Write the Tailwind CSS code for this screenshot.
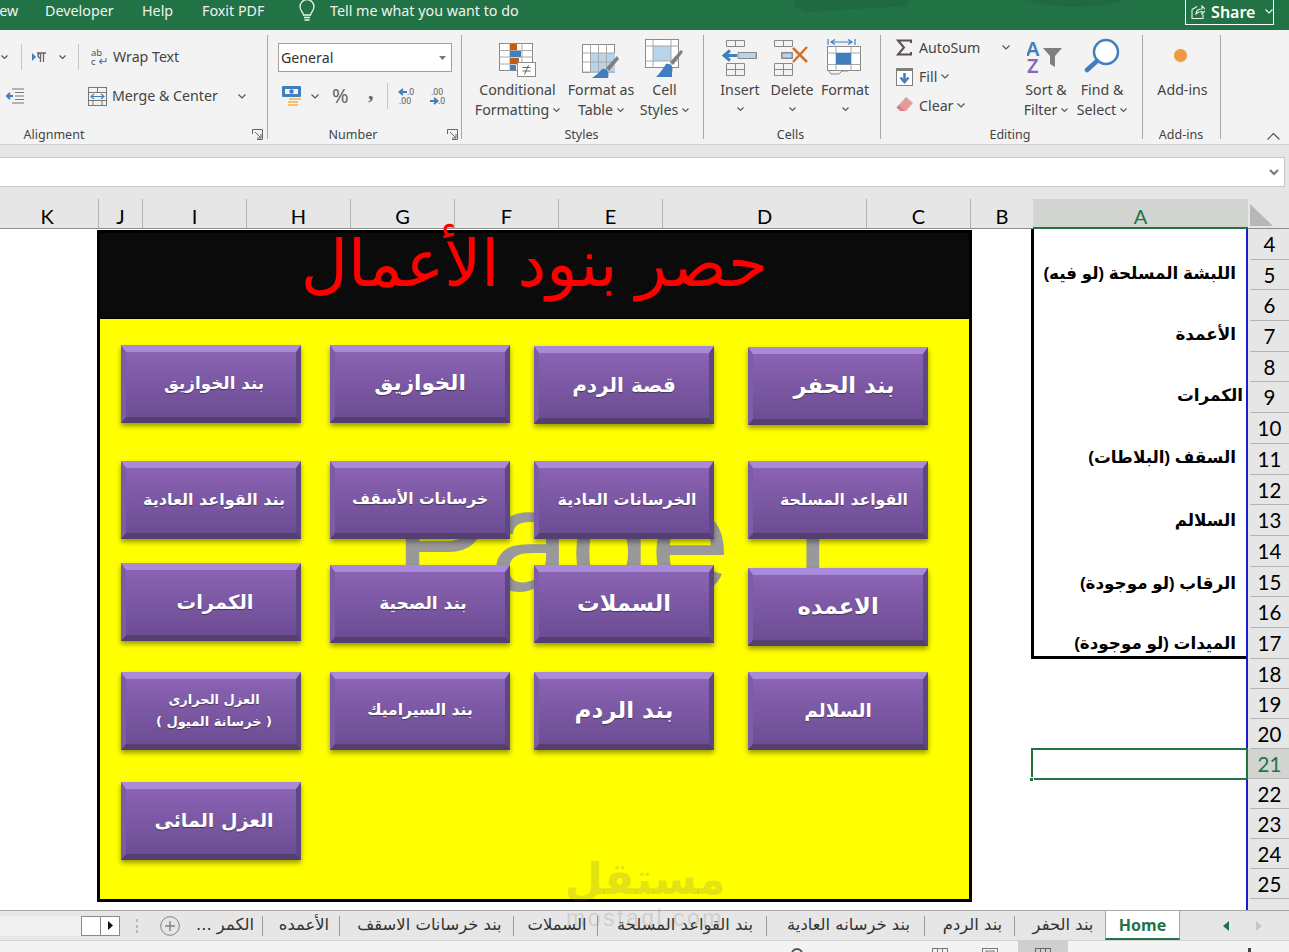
<!DOCTYPE html>
<html lang="en">
<head>
  <meta charset="UTF-8">
  <title>Excel - Home</title>
  <script src="https://cdn.jsdelivr.net/npm/@tailwindcss/browser@4"></script>
</head>
<body class="bg-white">
<div class="relative w-[1289px] h-[952px] overflow-hidden flex flex-col font-['Noto_Sans','DejaVu_Sans',sans-serif] text-[#444]">

  <!-- Title / tab strip -->
  <div class="relative h-[30px] bg-[#217346] text-[#f1f1f1] text-[14.300px] flex items-center overflow-hidden">
    <svg class="absolute left-[780px] top-0" width="400" height="14"><path d="M15 0h115l-3 6-50 3-50 3-12-6zM245 0h100l-25 6-30 1-30-3z" fill="#1f6a43"/></svg>
    <span class="absolute left-[-13px] top-0">View</span>
    <span class="absolute left-[45px] top-0">Developer</span>
    <span class="absolute left-[142px] top-0">Help</span>
    <span class="absolute left-[202px] top-0">Foxit PDF</span>
    <svg class="absolute left-[298px] top-0" width="18" height="22" fill="none" stroke="#f1f1f1" stroke-width="1.300"><path d="M5.500 15c-.3-3-3.500-4.500-3.500-8.300a7 7 0 0 1 14 0c0 3.800-3.200 5.300-3.500 8.300z"/><path d="M6 17.500h6M6.500 20h5"/></svg>
    <span class="absolute left-[330px] top-0">Tell me what you want to do</span>
    <div class="absolute left-[1185px] top-[-2px] w-[89px] h-[27px] border border-white flex items-center pl-[5px] gap-[6px] text-white font-semibold text-[16px]">
      <svg width="15" height="15" fill="none" stroke="#f1f1f1" stroke-width="1.100"><path d="M1 5.500v9h11v-4M1 5.500l5-3M5 10c0-4 3-5 6-5V2l4 4-4 4V7.500c-2 0-4 .5-6 2.500z"/></svg>
      <span>Share</span>
      <svg class="ml-[4px]" width="8" height="5" fill="none" stroke="#f1f1f1" stroke-width="1.200"><path d="M.5.500 4 4l3.500-3.500"/></svg>
    </div>
  </div>

  <!-- Ribbon -->
  <div class="h-[115px] flex bg-[#f3f3f3] border-b border-[#d2d2d2] text-[14.200px] leading-[20px]">

    <!-- Alignment -->
    <div class="relative w-[267px] shrink-0 flex flex-col">
      <div class="h-[97px] flex flex-col pt-[15px] gap-[15px]">
        <div class="h-6 flex items-center">
          <svg class="ml-[1px]" width="7" height="5" fill="none" stroke="#555" stroke-width="1.200"><path d="M.5.500 3.500 3.500l3-3"/></svg>
          <div class="ml-[13px] w-px h-[26px] bg-[#c6c6c6]"></div>
          <svg class="ml-[10px]" width="15" height="11"><path d="M0 1l4 4-4 4z" fill="#3f7fbf"/><path d="M5 1h9M8.500 1v9M11.500 1v9M8.500 1a2.500 2.500 0 0 0 0 5" fill="none" stroke="#666" stroke-width="1.300"/></svg>
          <svg class="ml-[12px]" width="7" height="5" fill="none" stroke="#555" stroke-width="1.200"><path d="M.5.500 3.500 3.500l3-3"/></svg>
          <div class="ml-[12px] w-px h-[26px] bg-[#c6c6c6]"></div>
          <svg class="ml-[12px]" width="16" height="18" fill="none"><text x="0" y="8" font-size="9.500" fill="#555" font-family="Noto Sans">ab</text><text x="0" y="17" font-size="9.500" fill="#555" font-family="Noto Sans">c</text><path d="M15 10v3.500H9M11 11l-2.500 2.500L11 16" stroke="#3f7fbf" stroke-width="1.100"/></svg>
          <span class="ml-[6px]">Wrap Text</span>
        </div>
        <div class="h-6 flex items-center">
          <svg class="ml-[6px]" width="18" height="16" fill="none"><path d="M7 8H1M4 5 1 8l3 3" stroke="#3f7fbf" stroke-width="2"/><path d="M6 1h12M9 4.500h9M9 8h9M9 11.500h9M6 15h12" stroke="#777"/></svg>
          <svg class="ml-[64px]" width="19" height="19" fill="none" stroke="#777"><rect x=".5" y=".5" width="18" height="18"/><path d="M.5 5.500h18M.5 13.500h18M9.500.500v5M5 13.500v5M14 13.500v5"/><path d="M3 9.500h13M6 7 3 9.500 6 12M13 7l3 2.500-3 2.500" stroke="#3f7fbf" stroke-width="1.100"/></svg>
          <span class="ml-[5px]">Merge &amp; Center</span>
          <svg class="ml-[20px]" width="8" height="5" fill="none" stroke="#555" stroke-width="1.200"><path d="M.5.500 4 4l3.500-3.500"/></svg>
        </div>
      </div>
      <div class="text-center text-[12.500px] leading-[16px] pr-[159px] text-[#444]">Alignment</div>
      <svg class="absolute left-[252px] top-[99px]" width="11" height="11" fill="none" stroke="#666"><path d="M.5 5V.5H10.500V10.500H5M3 3l6 6M9 5v4H5"/></svg>
    </div>
    <div class="w-px h-[104px] mt-[5px] bg-[#a8a8a8]"></div>

    <!-- Number -->
    <div class="relative w-[193px] shrink-0 flex flex-col">
      <div class="h-[97px] pl-[10px]">
        <div class="mt-[13px] w-[174px] h-[29px] bg-white border border-[#a0a0a0] flex items-center pl-[2px] text-[#333]">
          <span>General</span>
          <svg class="ml-auto mr-[5px]" width="7" height="4"><path d="M0 0h7L3.500 4z" fill="#777"/></svg>
        </div>
        <div class="mt-[12px] h-6 flex items-center">
          <svg class="ml-[4px]" width="20" height="20"><rect x="0" y="0" width="19" height="11" rx="1" fill="#3f7fbf"/><rect x="3" y="3" width="13" height="5" fill="#f3f3f3"/><circle cx="9.500" cy="5.500" r="2.200" fill="#3f7fbf"/><path d="M7 12h12v2H7zM6 15h10v2H6zM6 18h10v2H6z" fill="#f2c26b"/></svg>
          <svg class="ml-[9px]" width="8" height="5" fill="none" stroke="#555" stroke-width="1.200"><path d="M.5.500 4 4l3.500-3.500"/></svg>
          <span class="ml-[13px] w-[16px] text-[20px] text-[#666]">%</span>
          <span class="ml-[20px] w-[6px] text-[22px] leading-[12px] -mt-[9px] font-bold text-[#666] font-['Liberation_Serif',serif]">,</span>
          <div class="ml-[13px] w-px h-[26px] bg-[#c6c6c6]"></div>
          <svg class="ml-[10px]" width="17" height="18"><path d="M9 5H3M5 2 1.500 5 5 8" fill="none" stroke="#3f7fbf" stroke-width="2"/><text x="6" y="8" font-size="8.500" fill="#555" font-family="Noto Sans" text-anchor="start" dx="3">.0</text><text x="1" y="17" font-size="8.500" fill="#555" font-family="Noto Sans">.00</text></svg>
          <svg class="ml-[13px]" width="17" height="18"><text x="3" y="8" font-size="8.500" fill="#555" font-family="Noto Sans">.00</text><path d="M2 14h6M6 11l3.500 3L6 17" fill="none" stroke="#3f7fbf" stroke-width="2"/><text x="10" y="17" font-size="8.500" fill="#555" font-family="Noto Sans">.0</text></svg>
        </div>
      </div>
      <div class="text-center text-[12.500px] leading-[16px] pr-[23px]">Number</div>
      <svg class="absolute left-[179px] top-[99px]" width="11" height="11" fill="none" stroke="#666"><path d="M.5 5V.5H10.500V10.500H5M3 3l6 6M9 5v4H5"/></svg>
    </div>
    <div class="w-px h-[104px] mt-[5px] bg-[#a8a8a8]"></div>

    <!-- Styles -->
    <div class="w-[241px] shrink-0 flex flex-col">
      <div class="h-[97px] flex pl-[7px]">
        <div class="w-[97px] flex flex-col items-center">
          <svg class="mt-[13px] h-[37px]" width="38" height="35" fill="none"><rect x=".5" y=".5" width="33" height="27" fill="#fff" stroke="#8a8a8a"/><path d="M.5 7.500h33M.5 14h33M.5 21h33M11 .5v27M23 .5v27" stroke="#a8a8a8"/><rect x="11" y="1" width="7" height="6" fill="#c55a11"/><rect x="11" y="8" width="11" height="6" fill="#3f7fbf"/><rect x="11" y="15" width="9" height="6" fill="#c55a11"/><rect x="11" y="22" width="6" height="5" fill="#3f7fbf"/><rect x="18.500" y="19.500" width="18" height="14" fill="#fff" stroke="#8a8a8a"/><path d="M23.500 24.500h8M23.500 28h8M29.500 22l-4 9.500" stroke="#666"/></svg>
          <span class="leading-[20px]">Conditional</span>
          <span class="leading-[20px] flex items-center gap-[4px]">Formatting
            <svg width="7" height="5" fill="none" stroke="#555" stroke-width="1.100"><path d="M.5.500 3.500 3.500l3-3"/></svg></span>
        </div>
        <div class="w-[70px] flex flex-col items-center">
          <svg class="mt-[12px] h-[38px]" width="38" height="38" fill="none"><rect x=".5" y="2.500" width="32" height="28" fill="#fff" stroke="#8a8a8a"/><rect x="8" y="11" width="25" height="20" fill="#b9d3e8"/><path d="M.5 11h32M.5 20h32M.5 30h32M8.500 2.500v28M16.500 2.500v28M24.500 2.500v28" stroke="#a8a8a8"/><path d="M37 17 27 29l-3-3 11-12z" fill="#7f7f7f"/><path d="M20 27c4-1 8 2 6 9H10c3-2 7-5 10-9z" fill="#3f7fbf"/></svg>
          <span class="leading-[20px]">Format as</span>
          <span class="leading-[20px] flex items-center gap-[4px]">Table
            <svg width="7" height="5" fill="none" stroke="#555" stroke-width="1.100"><path d="M.5.500 3.500 3.500l3-3"/></svg></span>
        </div>
        <div class="w-[57px] flex flex-col items-center">
          <svg class="mt-[9px] h-[41px]" width="39" height="41" fill="none"><rect x=".5" y=".5" width="33" height="28" fill="#fff" stroke="#8a8a8a"/><rect x="8" y="7" width="18" height="15" fill="#b9d3e8"/><path d="M.5 7h33M.5 22h33M8 .5v28M26 .5v28" stroke="#a8a8a8"/><path d="M38 13 28 26l-3-3 11-12z" fill="#7f7f7f"/><path d="M21 25c4-1 8 2 6 9v4H11c3-3 7-8 10-13z" fill="#3f7fbf"/></svg>
          <span class="leading-[20px]">Cell</span>
          <span class="leading-[20px] flex items-center gap-[4px]">Styles
            <svg width="7" height="5" fill="none" stroke="#555" stroke-width="1.100"><path d="M.5.500 3.500 3.500l3-3"/></svg></span>
        </div>
      </div>
      <div class="text-center text-[12.500px] leading-[16px] pr-[2px]">Styles</div>
    </div>
    <div class="w-px h-[104px] mt-[5px] bg-[#a8a8a8]"></div>

    <!-- Cells -->
    <div class="w-[176px] shrink-0 flex flex-col">
      <div class="h-[97px] flex pl-[11px]">
        <div class="w-[50px] flex flex-col items-center">
          <svg class="mt-[10px] h-[40px]" width="36" height="36" fill="none" stroke="#8a8a8a"><path d="M4.500.500h18v6h-18zM13.500.500v6M16.500 12.500h18v6h-18zM25.500 12.500v6M4.500 23.500h18v12h-18zM4.500 29.500h18M13.500 23.500v12"/><path d="M16 12.500h18v6H16z" fill="#b9d3e8"/><path d="M15 15.500H4M8 10.500l-6 5 6 5" stroke="#3f7fbf" stroke-width="3"/></svg>
          <span class="leading-[20px]">Insert</span>
          <svg class="mt-[7px]" width="7" height="5" fill="none" stroke="#555" stroke-width="1.100"><path d="M.5.500 3.500 3.500l3-3"/></svg>
        </div>
        <div class="w-[54px] flex flex-col items-center">
          <svg class="mt-[10px] h-[40px]" width="36" height="36" fill="none" stroke="#8a8a8a"><path d="M.5.500h18v6H.5zM9.500.500v6M7.500 12.500h11v6h-11zM.5 23.500h18v12H.5zM.5 29.500h18M9.500 23.500v12"/><path d="M8 13h10v5H8z" fill="#b9d3e8"/><path d="M19 8l14 14M33 7 19 22" stroke="#d0722c" stroke-width="2.500"/></svg>
          <span class="leading-[20px]">Delete</span>
          <svg class="mt-[7px]" width="7" height="5" fill="none" stroke="#555" stroke-width="1.100"><path d="M.5.500 3.500 3.500l3-3"/></svg>
        </div>
        <div class="w-[52px] flex flex-col items-center">
          <svg class="mt-[8px] h-[42px]" width="36" height="38" fill="none"><path d="M1 1v6M28 1v6M4 4h21M8 1.500 4 4l4 2.500M21 1.500 25 4l-4 2.500" stroke="#3f7fbf" stroke-width="1.200"/><rect x=".5" y="8.500" width="33" height="24" fill="#fff" stroke="#8a8a8a"/><path d="M.5 15h33M.5 26.500h33M9 8.500v24M24 8.500v24" stroke="#a8a8a8"/><rect x="9" y="15" width="15" height="11.500" fill="#3f7fbf"/><path d="M2 33l2 3h8l3-3h6" stroke="#8a8a8a"/></svg>
          <span class="leading-[20px]">Format</span>
          <svg class="mt-[7px]" width="7" height="5" fill="none" stroke="#555" stroke-width="1.100"><path d="M.5.500 3.500 3.500l3-3"/></svg>
        </div>
      </div>
      <div class="text-center text-[12.500px] leading-[16px] pr-[3px]">Cells</div>
    </div>
    <div class="w-px h-[104px] mt-[5px] bg-[#a8a8a8]"></div>

    <!-- Editing -->
    <div class="w-[261px] shrink-0 flex flex-col">
      <div class="h-[97px] flex pl-[15px]">
        <div class="w-[122px] pt-[3px] flex flex-col">
          <div class="h-[29px] flex items-center">
            <svg width="16" height="17" fill="none" stroke="#5b4f55" stroke-width="2"><path d="M15 4V1.500H2L8 8.500 2 15.500H15V13"/></svg>
            <span class="ml-[7px]">AutoSum</span>
            <svg class="ml-[22px]" width="8" height="5" fill="none" stroke="#555" stroke-width="1.200"><path d="M.5.500 4 4l3.500-3.500"/></svg>
          </div>
          <div class="h-[29px] flex items-center">
            <svg width="17" height="18" fill="none"><rect x=".5" y=".5" width="16" height="17" fill="#fff" stroke="#7f7f7f"/><path d="M.5 2h16" stroke="#7f7f7f" stroke-width="2"/><path d="M8.500 5v7M4.500 9.500l4 4.500 4-4.500" stroke="#3f7fbf" stroke-width="2.500"/></svg>
            <span class="ml-[6px]">Fill</span>
            <svg class="ml-[4px]" width="8" height="5" fill="none" stroke="#555" stroke-width="1.200"><path d="M.5.500 4 4l3.500-3.500"/></svg>
          </div>
          <div class="h-[29px] flex items-center">
            <svg width="17" height="17"><path d="M10 0l7 6-7 8H4.500L.5 10.500z" fill="#e79a9e"/><path d="M3 8l6 6H4.500L.5 10.500z" fill="#d97f85"/></svg>
            <span class="ml-[6px]">Clear</span>
            <svg class="ml-[4px]" width="8" height="5" fill="none" stroke="#555" stroke-width="1.200"><path d="M.5.500 4 4l3.500-3.500"/></svg>
          </div>
        </div>
        <div class="w-[56px] flex flex-col items-center">
          <svg class="mt-[10px] h-[40px]" width="38" height="34" fill="none"><text x="-1" y="16" font-size="20" font-weight="600" fill="#3f7fbf" font-family="Noto Sans">A</text><text x="0" y="33" font-size="20" font-weight="600" fill="#8a66b8" font-family="Noto Sans">Z</text><path d="M16 8h19l-7 8v11l-5-3v-8z" fill="#7f7f7f"/></svg>
          <span class="leading-[20px]">Sort &amp;</span>
          <span class="leading-[20px] flex items-center gap-[4px]">Filter
            <svg width="7" height="5" fill="none" stroke="#555" stroke-width="1.100"><path d="M.5.500 3.500 3.500l3-3"/></svg></span>
        </div>
        <div class="w-[56px] flex flex-col items-center">
          <svg class="mt-[8px] h-[42px]" width="36" height="36" fill="none"><circle cx="22" cy="14" r="12" fill="#fff" stroke="#3f7fbf" stroke-width="2.500"/><path d="M13 23 3 32" stroke="#3f7fbf" stroke-width="4.500" stroke-linecap="round"/></svg>
          <span class="leading-[20px]">Find &amp;</span>
          <span class="leading-[20px] flex items-center gap-[4px]">Select
            <svg width="7" height="5" fill="none" stroke="#555" stroke-width="1.100"><path d="M.5.500 3.500 3.500l3-3"/></svg></span>
        </div>
      </div>
      <div class="text-center text-[12.500px] leading-[16px] pr-[3px]">Editing</div>
    </div>
    <div class="w-px h-[104px] mt-[5px] bg-[#a8a8a8]"></div>

    <!-- Add-ins -->
    <div class="w-[77px] shrink-0 flex flex-col">
      <div class="h-[97px] flex flex-col items-center pl-[2px]">
        <div class="mt-[19px] mr-[5px] w-[13px] h-[13px] rounded-full bg-[#ec9a45] shadow-[0_0_2px_#f4d9a0]"></div>
        <span class="mt-[18px] leading-[20px]">Add-ins</span>
      </div>
      <div class="text-center text-[12.500px] leading-[16px] pr-[1px]">Add-ins</div>
    </div>
    <div class="w-px h-[104px] mt-[5px] bg-[#a8a8a8]"></div>

    <div class="flex-1 relative">
      <svg class="absolute left-[46px] top-[103px]" width="13" height="7" fill="none" stroke="#555" stroke-width="1.200"><path d="M.5 6.500 6.500.5l6 6"/></svg>
    </div>
  </div>

  <!-- Formula bar -->
  <div class="h-[54px] bg-[#e6e6e6] pt-[12px] pr-[4px]">
    <div class="h-[30px] bg-white border-y border-r border-[#c6c6c6] flex items-center justify-end pr-[5px]">
      <svg width="10" height="7" fill="none" stroke="#777" stroke-width="2"><path d="M1 1l4 4 4-4"/></svg>
    </div>
  </div>

  <!-- Column headers -->
  <div class="h-[30px] flex bg-[#e6e6e6] border-b border-[#8e8e8e] text-[20px] leading-[34px] text-black text-center font-['Lato',sans-serif]">
    <div class="w-[99px] pr-[4px] border-r border-[#b4b4b4]">K</div>
    <div class="w-[44px] border-r border-[#b4b4b4]">J</div>
    <div class="w-[104px] border-r border-[#b4b4b4]">I</div>
    <div class="w-[104px] border-r border-[#b4b4b4]">H</div>
    <div class="w-[104px] border-r border-[#b4b4b4]">G</div>
    <div class="w-[104px] border-r border-[#b4b4b4]">F</div>
    <div class="w-[104px] border-r border-[#b4b4b4]">E</div>
    <div class="w-[204px] border-r border-[#b4b4b4]">D</div>
    <div class="w-[104px] border-r border-[#b4b4b4]">C</div>
    <div class="w-[62px]">B</div>
    <div class="w-[215px] h-[30px] bg-[#d2d4d2] border-b-2 border-[#217346] text-[#217346]">A</div>
    <div class="w-[41px] pl-[2px] pt-[5px]">
      <svg width="23" height="22"><path d="M0 0l23 22H0z" fill="#b7b7b7"/></svg>
    </div>
  </div>

  <!-- Sheet -->
  <div class="h-[681px] flex bg-white">

    <!-- Canvas with the drawn shapes -->
    <div class="relative w-[1031px] shrink-0">
      <div class="relative ml-[97px] mt-[1px] w-[875px] h-[672px] border-[3px] border-black bg-[#ffff00] flex flex-col">
        <div class="h-[86px] bg-[#0b0b0b] border-b-[1px] border-black text-[#ff0000] text-center text-[65px] leading-[62px] font-['Liberation_Sans','DejaVu_Sans',sans-serif]" dir="rtl">حصر بنود الأعمال</div>
        <span class="absolute left-[294px] top-[237px] text-[#999] text-[144px] leading-[144px] font-['Liberation_Sans',sans-serif]">Page 1</span>
      </div>

      <button class="absolute left-[121px] top-[116px] w-[180px] h-[78px] pl-[6px] pb-[2px] border-t-[7px] border-x-[5px] border-b-[6px] border-t-[#a98ad8] border-l-[#7c5ca6] border-r-[#5f4684] border-b-[#54406f] bg-gradient-to-b from-[#8a63b3] to-[#6c4d93] shadow-[0_3px_5px_rgba(0,0,0,0.4)] [text-shadow:0_1px_1px_rgba(0,0,0,0.4)] text-white font-bold text-[16.800px] font-['DejaVu_Sans',sans-serif]" dir="rtl">بند الخوازيق</button>
      <button class="absolute left-[330px] top-[116px] w-[180px] h-[78px] pb-[2px] border-t-[7px] border-x-[5px] border-b-[6px] border-t-[#a98ad8] border-l-[#7c5ca6] border-r-[#5f4684] border-b-[#54406f] bg-gradient-to-b from-[#8a63b3] to-[#6c4d93] shadow-[0_3px_5px_rgba(0,0,0,0.4)] [text-shadow:0_1px_1px_rgba(0,0,0,0.4)] text-white font-bold text-[21.500px] font-['DejaVu_Sans',sans-serif]" dir="rtl">الخوازيق</button>
      <button class="absolute left-[534px] top-[117px] w-[180px] h-[78px] pb-[2px] border-t-[7px] border-x-[5px] border-b-[6px] border-t-[#a98ad8] border-l-[#7c5ca6] border-r-[#5f4684] border-b-[#54406f] bg-gradient-to-b from-[#8a63b3] to-[#6c4d93] shadow-[0_3px_5px_rgba(0,0,0,0.4)] [text-shadow:0_1px_1px_rgba(0,0,0,0.4)] text-white font-bold text-[20px] font-['DejaVu_Sans',sans-serif]" dir="rtl">قصة الردم</button>
      <button class="absolute left-[748px] top-[118px] w-[180px] h-[78px] pl-[12px] pb-[2px] border-t-[7px] border-x-[5px] border-b-[6px] border-t-[#a98ad8] border-l-[#7c5ca6] border-r-[#5f4684] border-b-[#54406f] bg-gradient-to-b from-[#8a63b3] to-[#6c4d93] shadow-[0_3px_5px_rgba(0,0,0,0.4)] [text-shadow:0_1px_1px_rgba(0,0,0,0.4)] text-white font-bold text-[22.500px] font-['DejaVu_Sans',sans-serif]" dir="rtl">بند الحفر</button>

      <button class="absolute left-[121px] top-[232px] w-[180px] h-[78px] pl-[6px] pb-[2px] border-t-[7px] border-x-[5px] border-b-[6px] border-t-[#a98ad8] border-l-[#7c5ca6] border-r-[#5f4684] border-b-[#54406f] bg-gradient-to-b from-[#8a63b3] to-[#6c4d93] shadow-[0_3px_5px_rgba(0,0,0,0.4)] [text-shadow:0_1px_1px_rgba(0,0,0,0.4)] text-white font-bold text-[16px] font-['DejaVu_Sans',sans-serif]" dir="rtl">بند القواعد العادية</button>
      <button class="absolute left-[330px] top-[232px] w-[180px] h-[78px] pb-[2px] border-t-[7px] border-x-[5px] border-b-[6px] border-t-[#a98ad8] border-l-[#7c5ca6] border-r-[#5f4684] border-b-[#54406f] bg-gradient-to-b from-[#8a63b3] to-[#6c4d93] shadow-[0_3px_5px_rgba(0,0,0,0.4)] [text-shadow:0_1px_1px_rgba(0,0,0,0.4)] text-white font-bold text-[15.500px] font-['DejaVu_Sans',sans-serif]" dir="rtl">خرسانات الأسقف</button>
      <button class="absolute left-[534px] top-[232px] w-[180px] h-[78px] pl-[6px] pb-[2px] border-t-[7px] border-x-[5px] border-b-[6px] border-t-[#a98ad8] border-l-[#7c5ca6] border-r-[#5f4684] border-b-[#54406f] bg-gradient-to-b from-[#8a63b3] to-[#6c4d93] shadow-[0_3px_5px_rgba(0,0,0,0.4)] [text-shadow:0_1px_1px_rgba(0,0,0,0.4)] text-white font-bold text-[16px] font-['DejaVu_Sans',sans-serif]" dir="rtl">الخرسانات العادية</button>
      <button class="absolute left-[748px] top-[232px] w-[180px] h-[78px] pl-[12px] pb-[2px] border-t-[7px] border-x-[5px] border-b-[6px] border-t-[#a98ad8] border-l-[#7c5ca6] border-r-[#5f4684] border-b-[#54406f] bg-gradient-to-b from-[#8a63b3] to-[#6c4d93] shadow-[0_3px_5px_rgba(0,0,0,0.4)] [text-shadow:0_1px_1px_rgba(0,0,0,0.4)] text-white font-bold text-[15.700px] font-['DejaVu_Sans',sans-serif]" dir="rtl">القواعد المسلحة</button>

      <button class="absolute left-[121px] top-[334px] w-[180px] h-[78px] pl-[8px] border-t-[7px] border-x-[5px] border-b-[6px] border-t-[#a98ad8] border-l-[#7c5ca6] border-r-[#5f4684] border-b-[#54406f] bg-gradient-to-b from-[#8a63b3] to-[#6c4d93] shadow-[0_3px_5px_rgba(0,0,0,0.4)] [text-shadow:0_1px_1px_rgba(0,0,0,0.4)] text-white font-bold text-[19.500px] font-['DejaVu_Sans',sans-serif]" dir="rtl">الكمرات</button>
      <button class="absolute left-[330px] top-[336px] w-[180px] h-[78px] pl-[6px] pb-[2px] border-t-[7px] border-x-[5px] border-b-[6px] border-t-[#a98ad8] border-l-[#7c5ca6] border-r-[#5f4684] border-b-[#54406f] bg-gradient-to-b from-[#8a63b3] to-[#6c4d93] shadow-[0_3px_5px_rgba(0,0,0,0.4)] [text-shadow:0_1px_1px_rgba(0,0,0,0.4)] text-white font-bold text-[17px] font-['DejaVu_Sans',sans-serif]" dir="rtl">بند الصحية</button>
      <button class="absolute left-[534px] top-[336px] w-[180px] h-[78px] pb-[2px] border-t-[7px] border-x-[5px] border-b-[6px] border-t-[#a98ad8] border-l-[#7c5ca6] border-r-[#5f4684] border-b-[#54406f] bg-gradient-to-b from-[#8a63b3] to-[#6c4d93] shadow-[0_3px_5px_rgba(0,0,0,0.4)] [text-shadow:0_1px_1px_rgba(0,0,0,0.4)] text-white font-bold text-[22.500px] font-['DejaVu_Sans',sans-serif]" dir="rtl">السملات</button>
      <button class="absolute left-[748px] top-[339px] w-[180px] h-[78px] pb-[2px] border-t-[7px] border-x-[5px] border-b-[6px] border-t-[#a98ad8] border-l-[#7c5ca6] border-r-[#5f4684] border-b-[#54406f] bg-gradient-to-b from-[#8a63b3] to-[#6c4d93] shadow-[0_3px_5px_rgba(0,0,0,0.4)] [text-shadow:0_1px_1px_rgba(0,0,0,0.4)] text-white font-bold text-[22.500px] font-['DejaVu_Sans',sans-serif]" dir="rtl">الاعمده</button>

      <button class="absolute left-[121px] top-[443px] w-[180px] h-[78px] pl-[6px] pb-[2px] border-t-[7px] border-x-[5px] border-b-[6px] border-t-[#a98ad8] border-l-[#7c5ca6] border-r-[#5f4684] border-b-[#54406f] bg-gradient-to-b from-[#8a63b3] to-[#6c4d93] shadow-[0_3px_5px_rgba(0,0,0,0.4)] [text-shadow:0_1px_1px_rgba(0,0,0,0.4)] text-white font-bold text-[13px] leading-[22px] font-['DejaVu_Sans',sans-serif]" dir="rtl">العزل الحرارى<br>( خرسانة الميول )</button>
      <button class="absolute left-[330px] top-[443px] w-[180px] h-[78px] pb-[2px] border-t-[7px] border-x-[5px] border-b-[6px] border-t-[#a98ad8] border-l-[#7c5ca6] border-r-[#5f4684] border-b-[#54406f] bg-gradient-to-b from-[#8a63b3] to-[#6c4d93] shadow-[0_3px_5px_rgba(0,0,0,0.4)] [text-shadow:0_1px_1px_rgba(0,0,0,0.4)] text-white font-bold text-[15.600px] font-['DejaVu_Sans',sans-serif]" dir="rtl">بند السيراميك</button>
      <button class="absolute left-[534px] top-[443px] w-[180px] h-[78px] pb-[2px] border-t-[7px] border-x-[5px] border-b-[6px] border-t-[#a98ad8] border-l-[#7c5ca6] border-r-[#5f4684] border-b-[#54406f] bg-gradient-to-b from-[#8a63b3] to-[#6c4d93] shadow-[0_3px_5px_rgba(0,0,0,0.4)] [text-shadow:0_1px_1px_rgba(0,0,0,0.4)] text-white font-bold text-[23px] font-['DejaVu_Sans',sans-serif]" dir="rtl">بند الردم</button>
      <button class="absolute left-[748px] top-[443px] w-[180px] h-[78px] pb-[2px] border-t-[7px] border-x-[5px] border-b-[6px] border-t-[#a98ad8] border-l-[#7c5ca6] border-r-[#5f4684] border-b-[#54406f] bg-gradient-to-b from-[#8a63b3] to-[#6c4d93] shadow-[0_3px_5px_rgba(0,0,0,0.4)] [text-shadow:0_1px_1px_rgba(0,0,0,0.4)] text-white font-bold text-[18.500px] font-['DejaVu_Sans',sans-serif]" dir="rtl">السلالم</button>

      <button class="absolute left-[121px] top-[553px] w-[180px] h-[78px] pl-[6px] pb-[2px] border-t-[7px] border-x-[5px] border-b-[6px] border-t-[#a98ad8] border-l-[#7c5ca6] border-r-[#5f4684] border-b-[#54406f] bg-gradient-to-b from-[#8a63b3] to-[#6c4d93] shadow-[0_3px_5px_rgba(0,0,0,0.4)] [text-shadow:0_1px_1px_rgba(0,0,0,0.4)] text-white font-bold text-[19px] font-['DejaVu_Sans',sans-serif]" dir="rtl">العزل المائى</button>
    </div>

    <!-- Column A -->
    <div class="w-[217px] shrink-0 border-r-2 border-[#1a1ad0] flex flex-col font-['Liberation_Sans','DejaVu_Sans',sans-serif] font-bold text-black text-[16.800px] text-right">
      <div class="h-[430px] border-l-[3px] border-b-[3px] border-black" dir="rtl">
        <div class="h-[30.700px]"></div>
        <div class="h-[30.700px] pr-[10px] leading-[27px]">اللبشة المسلحة (لو فيه)</div>
        <div class="h-[30.700px]"></div>
        <div class="h-[30.700px] pr-[10px] leading-[27px]">الأعمدة</div>
        <div class="h-[30.700px]"></div>
        <div class="h-[30.700px] pr-[3px] leading-[27px]">الكمرات</div>
        <div class="h-[30.700px]"></div>
        <div class="h-[30.700px] pr-[10px] leading-[28px]">السقف (البلاطات)</div>
        <div class="h-[30.700px]"></div>
        <div class="h-[30.700px] pr-[10px] leading-[31px]">السلالم</div>
        <div class="h-[30.700px]"></div>
        <div class="h-[30.700px] pr-[10px] leading-[33px]">الرقاب (لو موجودة)</div>
        <div class="h-[30.700px]"></div>
        <div class="h-[30.700px] pr-[10px] leading-[31px]">الميدات (لو موجودة)</div>
      </div>
      <div class="h-[89px]"></div>
      <div class="relative w-[217px] h-[32px] border-2 border-[#217346]">
        <div class="absolute left-[-4px] bottom-[-4px] w-[5px] h-[5px] bg-[#217346] border border-white"></div>
      </div>
    </div>

    <!-- Row headers -->
    <div class="w-[41px] shrink-0 pl-[2px] bg-[#e6e6e6] text-[20.500px] text-black text-center font-['Lato',sans-serif] overflow-hidden">
      <div class="h-[30.700px] leading-[30px] border-b border-[#b4b4b4]">4</div>
      <div class="h-[30.700px] leading-[30px] border-b border-[#b4b4b4]">5</div>
      <div class="h-[30.700px] leading-[30px] border-b border-[#b4b4b4]">6</div>
      <div class="h-[30.700px] leading-[30px] border-b border-[#b4b4b4]">7</div>
      <div class="h-[30.700px] leading-[30px] border-b border-[#b4b4b4]">8</div>
      <div class="h-[30.700px] leading-[30px] border-b border-[#b4b4b4]">9</div>
      <div class="h-[30.700px] leading-[30px] border-b border-[#b4b4b4]">10</div>
      <div class="h-[30.700px] leading-[30px] border-b border-[#b4b4b4]">11</div>
      <div class="h-[30.700px] leading-[30px] border-b border-[#b4b4b4]">12</div>
      <div class="h-[30.700px] leading-[30px] border-b border-[#b4b4b4]">13</div>
      <div class="h-[30.700px] leading-[30px] border-b border-[#b4b4b4]">14</div>
      <div class="h-[30.700px] leading-[30px] border-b border-[#b4b4b4]">15</div>
      <div class="h-[30.700px] leading-[30px] border-b border-[#b4b4b4]">16</div>
      <div class="h-[30.700px] leading-[30px] border-b border-[#b4b4b4]">17</div>
      <div class="h-[30px] leading-[30px] border-b border-[#b4b4b4]">18</div>
      <div class="h-[30px] leading-[30px] border-b border-[#b4b4b4]">19</div>
      <div class="h-[30px] leading-[30px] border-b border-[#b4b4b4]">20</div>
      <div class="h-[30px] leading-[30px] -ml-[2px] pl-[2px] border-b border-[#b4b4b4] bg-[#d2d4d2] text-[#217346]">21</div>
      <div class="h-[30px] leading-[30px] border-b border-[#b4b4b4]">22</div>
      <div class="h-[30px] leading-[30px] border-b border-[#b4b4b4]">23</div>
      <div class="h-[30px] leading-[30px] border-b border-[#b4b4b4]">24</div>
      <div class="h-[30px] leading-[30px] border-b border-[#b4b4b4]">25</div>
      <div class="h-[12px]"></div>
    </div>
  </div>

  <!-- Sheet tabs -->
  <div class="h-[30px] flex items-center bg-[#e6e6e6] border-t border-[#a8a8a8] text-[16.400px] text-[#333] font-['DejaVu_Sans',sans-serif]">
    <div class="w-[81px] h-[20px] bg-[#f0f0f0]"></div>
    <div class="w-[20px] h-[20px] bg-white border border-[#8a8a8a]"></div>
    <div class="w-[19px] h-[20px] bg-white border-y border-r border-[#8a8a8a] flex items-center justify-center">
      <svg width="5" height="9"><path d="M0 0l5 4.500L0 9z" fill="#111"/></svg>
    </div>
    <svg class="ml-[15px]" width="4" height="16"><path d="M1 1h2v3H1zM1 7h2v3H1zM1 12h2v3H1z" fill="#b8b8b8"/></svg>
    <svg class="ml-[21px]" width="20" height="20" fill="none" stroke="#7f7f7f"><circle cx="10" cy="10" r="9.300"/><path d="M10 5v10M5 10h10" stroke-width="1.400"/></svg>
    <div class="w-[83px] h-[20px] flex items-center justify-center pl-[8px] border-r border-[#9a9a9a] leading-none" dir="rtl">الكمر ...</div>
    <div class="w-[77px] h-[20px] flex items-center justify-center pl-[6px] border-r border-[#9a9a9a] leading-none" dir="rtl">الأعمده</div>
    <div class="w-[174px] h-[20px] flex items-center justify-center pl-[6px] border-r border-[#9a9a9a] leading-none" dir="rtl">بند خرسانات الاسقف</div>
    <div class="w-[84px] h-[20px] flex items-center justify-center pl-[3px] border-r border-[#9a9a9a] leading-none" dir="rtl">السملات</div>
    <div class="w-[169px] h-[20px] flex items-center justify-center pl-[6px] border-r border-[#9a9a9a] leading-none" dir="rtl">بند القواعد المسلحة</div>
    <div class="w-[158px] h-[20px] flex items-center justify-center pl-[6px] border-r border-[#9a9a9a] leading-none" dir="rtl">بند خرسانه العادية</div>
    <div class="w-[90px] h-[20px] flex items-center justify-center pl-[6px] border-r border-[#9a9a9a] leading-none" dir="rtl">بند الردم</div>
    <div class="w-[90px] h-[20px] flex items-center justify-center pl-[6px] leading-none" dir="rtl">بند الحفر</div>
    <div class="w-[75px] h-[29px] flex items-center justify-center bg-white border-x border-[#a8a8a8] border-b-2 border-b-[#217346] text-[#217346] font-bold text-[16px] font-['Noto_Sans',sans-serif]">Home</div>
    <svg class="ml-[43px]" width="6" height="10"><path d="M6 0v10L0 5z" fill="#217346"/></svg>
    <svg class="ml-[27px]" width="6" height="10"><path d="M0 0v10l6-5z" fill="#c6c6c6"/></svg>
  </div>

  <!-- Status bar, cut off by the window -->
  <div class="h-[12px] flex bg-[#f3f3f3] border-t border-[#d2d2d2] overflow-hidden">
    <svg class="ml-[790px] mt-[6px]" width="14" height="11"><circle cx="7" cy="7" r="5" fill="none" stroke="#555" stroke-width="2"/></svg>
    <svg class="ml-[128px] mt-[7px]" width="16" height="10" fill="none" stroke="#777"><rect x=".5" y=".5" width="15" height="12"/><path d="M5.500 0v10M10.500 0v10"/></svg>
    <svg class="ml-[34px] mt-[7px]" width="16" height="10" fill="none" stroke="#777"><rect x=".5" y=".5" width="15" height="12"/><rect x="4" y="3" width="8" height="9"/></svg>
    <div class="ml-[20px] w-[50px] h-[12px] bg-[#cfcfcf] flex justify-center pt-[7px]">
      <svg width="16" height="10" fill="none" stroke="#666"><rect x=".5" y=".5" width="15" height="12"/><path d="M5.500 0v10M10.500 0v10"/></svg>
    </div>
    <div class="ml-[180px] mt-[7px] w-[3px] h-[9px] bg-[#444]"></div>
  </div>

  <!-- Site watermark over the picture -->
  <div class="absolute left-[560px] top-[850px] w-[170px] flex flex-col items-center text-[#6b6b6b]/20 pointer-events-none">
    <span class="text-[44px] leading-[58px] font-bold font-['DejaVu_Sans',sans-serif]" dir="rtl">مستقل</span>
    <span class="text-[23px] leading-[20px] font-['Liberation_Sans',sans-serif] tracking-[2.500px]">mostaql.com</span>
  </div>
</div>
</body>
</html>
